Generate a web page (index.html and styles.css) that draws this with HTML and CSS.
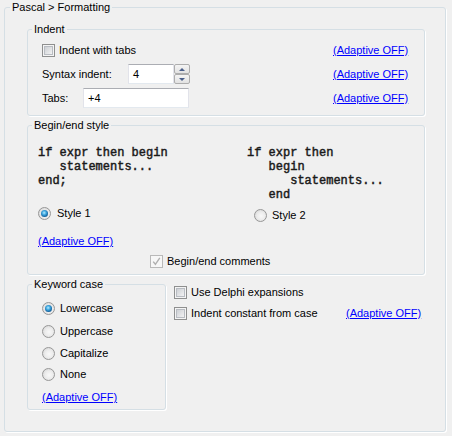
FILE: index.html
```html
<!DOCTYPE html>
<html>
<head>
<meta charset="utf-8">
<title>Pascal Formatting</title>
<link rel="stylesheet" href="styles.css">
</head>
<body>
<fieldset class="group outer">
  <legend>Pascal &gt; Formatting</legend>
  <div class="outer-body">
    <fieldset class="group indent">
      <legend>Indent</legend>
      <div class="indent-body">
        <div class="row">
          <div class="row-main">
            <span class="cb"></span><span class="cb-text">Indent with tabs</span>
          </div>
          <a class="link">(Adaptive OFF)</a>
        </div>
        <div class="row">
          <div class="row-main">
            <span class="lbl lbl-syntax">Syntax indent:</span>
            <span class="edit edit-syntax">4</span>
            <span class="spin"><span class="spin-btn"><span class="arr-up"></span></span><span class="spin-btn"><span class="arr-down"></span></span></span>
          </div>
          <a class="link">(Adaptive OFF)</a>
        </div>
        <div class="row">
          <div class="row-main">
            <span class="lbl lbl-tabs">Tabs:</span>
            <span class="edit edit-tabs">+4</span>
          </div>
          <a class="link">(Adaptive OFF)</a>
        </div>
      </div>
    </fieldset>

    <fieldset class="group beginend">
      <legend>Begin/end style</legend>
      <div class="be-body">
        <div class="be-cols">
          <div class="be-col be-left">
            <pre class="code">if expr then begin
   statements...
end;</pre>
            <div class="radio-row be-radio1"><span class="rb checked"></span><span>Style 1</span></div>
          </div>
          <div class="be-col be-right">
            <pre class="code">if expr then
   begin
      statements...
   end</pre>
            <div class="radio-row be-radio2"><span class="rb"></span><span>Style 2</span></div>
          </div>
        </div>
        <a class="link be-link">(Adaptive OFF)</a>
        <div class="cb-row be-comments"><span class="cb disabled"><svg width="9" height="9" viewBox="0 0 9 9"><path d="M1.2 4.6 L3.4 7.3 L7.8 0.9" fill="none" stroke="#b0b0b0" stroke-width="1.4"/></svg></span><span class="cb-text">Begin/end comments</span></div>
      </div>
    </fieldset>

    <div class="bottom">
      <fieldset class="group keyword">
        <legend>Keyword case</legend>
        <div class="kw-body">
          <div class="radio-row kw1"><span class="rb checked"></span><span>Lowercase</span></div>
          <div class="radio-row kw2"><span class="rb"></span><span>Uppercase</span></div>
          <div class="radio-row kw3"><span class="rb"></span><span>Capitalize</span></div>
          <div class="radio-row kw4"><span class="rb"></span><span>None</span></div>
          <a class="link kw-link">(Adaptive OFF)</a>
        </div>
      </fieldset>
      <div class="side">
        <div class="cb-row side1"><span class="cb"></span><span class="cb-text">Use Delphi expansions</span></div>
        <div class="cb-row side2">
          <div class="side-main"><span class="cb"></span><span class="cb-text">Indent constant from case</span></div>
          <a class="link">(Adaptive OFF)</a>
        </div>
      </div>
    </div>
  </div>
</fieldset>
</body>
</html>
```

FILE: styles.css
```css
* { box-sizing: border-box; }
html, body { margin: 0; padding: 0; background: #f0f0f0; }
body {
  width: 452px;
  height: 436px;
  overflow: hidden;
  font: 11px/13px "Liberation Sans", Arial, sans-serif;
  color: #000;
}

.group {
  margin: 0;
  padding: 0 0 0 4px;
  min-width: 0;
  border: 1px solid #d5dfe5;
  border-radius: 3px;
  box-shadow: 1px 1px 0 #fff;
}
.group > legend {
  padding: 0 2px;
  line-height: 14px;
  font-size: 11px;
  color: #000;
}

.outer {
  margin: 0 6px 0 4px;
  padding-left: 5px;
  height: 432px;
}
.outer-body {
  padding: 8px 20px 0 17px;
}

/* Indent */
.indent-body { padding: 2px 0 5px 10px; }
.row { display: flex; align-items: center; height: 24px; }
.row-main { display: flex; align-items: center; width: 291px; }
.lbl-syntax { width: 86px; }
.lbl-tabs { width: 41px; }

.link {
  color: #0000ff;
  text-decoration: underline;
  cursor: pointer;
  white-space: nowrap;
}

.edit {
  display: flex;
  align-items: center;
  height: 20px;
  background: #fff;
  border: 1px solid #e2e3ea;
  border-top-color: #abadb3;
  border-bottom-color: #e3e9ef;
  padding-left: 4px;
}
.edit-syntax { width: 46px; }
.edit-tabs { width: 106px; }

.spin {
  display: flex;
  flex-direction: column;
  width: 16px;
  height: 20px;
}
.spin-btn {
  flex: 1;
  display: flex;
  align-items: center;
  justify-content: center;
  border: 1px solid #adadad;
  border-radius: 2px;
  background: linear-gradient(#f4f4f4, #e2e2e2);
}
.arr-up, .arr-down { width: 0; height: 0; border-left: 3px solid transparent; border-right: 3px solid transparent; }
.arr-up { border-bottom: 3px solid #4a5f8a; }
.arr-down { border-top: 3px solid #4a5f8a; }

/* checkbox */
.cb {
  position: relative;
  flex: none;
  width: 13px;
  height: 13px;
  border: 1px solid #8e8f8f;
  background: #f4f4f4;
  margin-right: 4px;
}
.cb::before {
  content: "";
  position: absolute;
  left: 1px; top: 1px; right: 1px; bottom: 1px;
  border: 1px solid #b8bcc2;
  background: linear-gradient(135deg, #cdd0d4, #f2f2f3);
}
.cb.disabled { border-color: #b9b9b9; background: #f7f7f7; }
.cb.disabled::before { display: none; }
.cb svg { position: absolute; left: 1px; top: 1px; }

.cb-row { display: flex; align-items: center; height: 16px; }

/* radio */
.radio-row { display: flex; align-items: center; height: 16px; }
.rb {
  position: relative;
  flex: none;
  width: 13px;
  height: 13px;
  border-radius: 50%;
  border: 1px solid #979797;
  background: radial-gradient(circle at 55% 55%, #f8f8f8 0, #ececec 45%, #cfcfcf 100%);
  margin-right: 5px;
}
.rb.checked::after {
  content: "";
  position: absolute;
  left: 2px; top: 2px;
  width: 7px; height: 7px;
  border-radius: 50%;
  background: radial-gradient(circle at 45% 40%, #b6ecff 0, #3fa8e0 35%, #12609c 70%, #0b3f6a 100%);
}

/* Begin/end */
.beginend { margin-top: 2px; }
.be-body { padding: 0 0 5px 6px; }
.be-cols { display: flex; }
.be-left { width: 209px; }
.code {
  margin: 14px 0 0 0;
  font: normal 12px/14px "Liberation Mono", "Courier New", monospace;
  color: #1a1a1a;
  -webkit-text-stroke: 0.45px #1a1a1a;
}
.be-radio1 { margin-top: 17px; }
.be-radio1 .rb { margin-right: 6px; }
.be-radio2 { margin-top: 5px; margin-left: 7px; }
.be-link { display: block; width: max-content; line-height: 14px; margin-top: 11px; }
.be-comments { margin: 5px 0 0 112px; }

/* bottom */
.bottom { display: flex; align-items: flex-start; }
.keyword { margin-top: 2px; width: 139px; flex: none; }
.kw-body { padding: 9px 0 4px 10px; }
.kw2 { margin-top: 7px; }
.kw3 { margin-top: 6px; }
.kw4 { margin-top: 5px; }
.kw-link { display: block; width: max-content; line-height: 16px; margin-top: 7px; }

.side { margin-left: 8px; padding-top: 9px; }
.side2 { margin-top: 5px; }
.side-main { display: flex; align-items: center; width: 172px; }
```
